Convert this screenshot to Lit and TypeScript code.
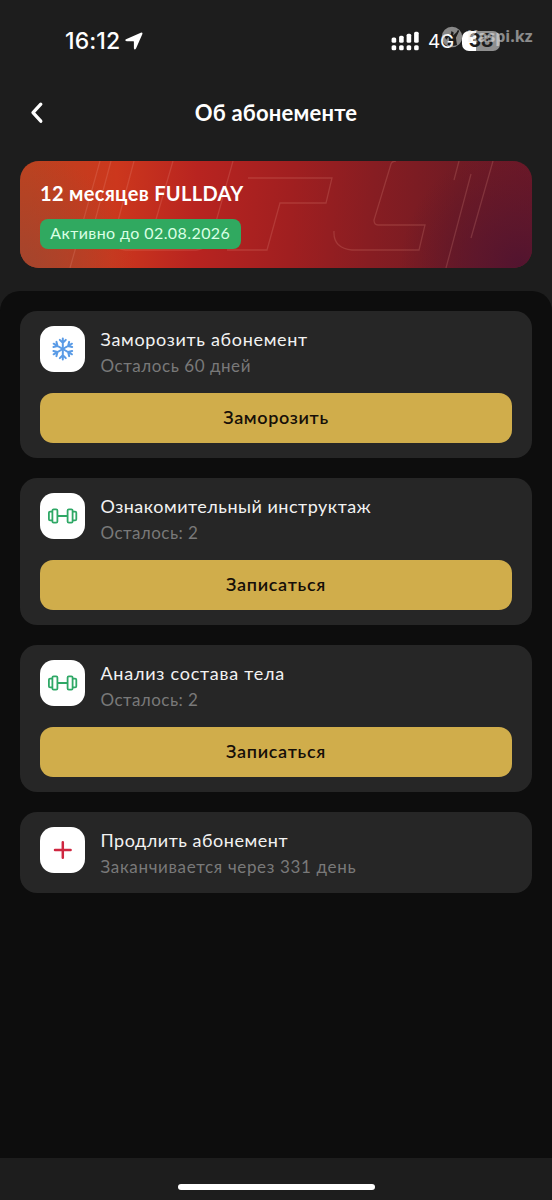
import { LitElement, html, svg, css } from "lit";
import { customElement, property } from "lit/decorators.js";
import { styleMap } from "lit/directives/style-map.js";

const snowflake = html`<svg viewBox="0 0 46 46" width="46" height="46" fill="none" stroke="#5a9be6" stroke-width="2" stroke-linecap="round" stroke-linejoin="round">
  ${[0, 60, 120, 180, 240, 300].map(
    (a) => svg`<path transform="rotate(${a} 22.8 23)" d="M22.8 23V12.4M19.8 13.9L22.8 16.9L25.8 13.9"/>`
  )}
</svg>`;

const dumbbell = html`<svg viewBox="0 0 46 46" width="46" height="46" fill="none" stroke="#2fa866" stroke-width="1.8" stroke-linejoin="round">
  <rect x="12.4" y="16.4" width="5" height="13.2" rx="1.2"/>
  <rect x="27.6" y="16.4" width="5" height="13.2" rx="1.2"/>
  <path d="M12.4 18.6H10.1Q8.9 18.6 8.9 19.8V26.2Q8.9 27.4 10.1 27.4H12.4M32.6 18.6H35.1Q36.3 18.6 36.3 19.8V26.2Q36.3 27.4 35.1 27.4H32.6M17.4 23H27.6"/>
</svg>`;

const plus = html`<svg viewBox="0 0 46 46" width="46" height="46" fill="none" stroke="#cf2740" stroke-width="2.5" stroke-linecap="round">
  <path d="M22.8 15.2V30.8M15 23H30.6"/>
</svg>`;

const icons: Record<string, unknown> = { snowflake, dumbbell, plus };

interface Item {
  icon: string;
  title: string;
  titleSpacing: number;
  note: string;
  noteSpacing: number;
  action?: string;
  actionSpacing?: number;
}

const items: Item[] = [
  { icon: "snowflake", title: "Заморозить абонемент", titleSpacing: 0.68, note: "Осталось 60 дней", noteSpacing: 0.55, action: "Заморозить", actionSpacing: 0.65 },
  { icon: "dumbbell", title: "Ознакомительный инструктаж", titleSpacing: 0.5, note: "Осталось: 2", noteSpacing: 0.45, action: "Записаться", actionSpacing: 0.7 },
  { icon: "dumbbell", title: "Анализ состава тела", titleSpacing: 0.75, note: "Осталось: 2", noteSpacing: 0.45, action: "Записаться", actionSpacing: 0.7 },
  { icon: "plus", title: "Продлить абонемент", titleSpacing: 0.52, note: "Заканчивается через 331 день", noteSpacing: 0.65 },
];

@customElement("option-card")
class OptionCard extends LitElement {
  @property({ attribute: false }) item!: Item;

  static styles = css`
    :host { display: block; background: #262626; border-radius: 17px; padding: 15px 20px; }
    .head { display: flex; gap: 15.5px; height: 51px; }
    .tile { width: 45px; height: 45.5px; border-radius: 14px; background: #fff; flex: none; overflow: hidden; }
    .tile svg { display: block; }
    .title { font-size: 18px; line-height: 26px; color: #f2f2f2; white-space: nowrap; }
    .note { font-size: 17px; line-height: 28px; color: #797979; white-space: nowrap; }
    .action {
      display: flex; align-items: center; justify-content: center; width: 100%; height: 50px; margin-top: 16px;
      padding: 0 0 2px; border: 0; border-radius: 13px; background: #d0ad4b; color: #160f08;
      font: 600 18px/48px "Lato", sans-serif;
    }
  `;

  render() {
    const i = this.item;
    return html`
      <div class="head">
        <div class="tile">${icons[i.icon]}</div>
        <div>
          <div class="title" style=${styleMap({ letterSpacing: `${i.titleSpacing}px` })}>${i.title}</div>
          <div class="note" style=${styleMap({ letterSpacing: `${i.noteSpacing}px` })}>${i.note}</div>
        </div>
      </div>
      ${i.action
        ? html`<button class="action" style=${styleMap({ letterSpacing: `${i.actionSpacing}px` })}>${i.action}</button>`
        : ""}
    `;
  }
}

@customElement("app-root")
class AppRoot extends LitElement {
  static styles = css`
    :host { display: flex; flex-direction: column; position: relative; width: 552px; height: 1200px; overflow: hidden; background: #1d1d1d; color: #fff; font-family: "Lato", sans-serif; }
    .status { display: flex; justify-content: space-between; height: 82px; padding: 0 52px 0 65px; font-family: "Inter", sans-serif; }
    .clock { display: flex; align-items: center; gap: 5px; font-size: 23px; font-weight: 500; letter-spacing: 0.1px; }
    .radio { display: flex; align-items: center; }
    .net { font-size: 19px; margin-left: 8px; width: 34px; letter-spacing: -0.3px; }
    .battery { width: 38px; height: 20px; border-radius: 7px; background: linear-gradient(90deg, #fff 38%, #8f8f8f 38%); color: #1d1d1d; font-size: 19px; font-weight: 700; line-height: 20px; text-align: center; }
    .mark { position: absolute; left: 441px; top: 25px; display: flex; align-items: center; height: 23px; opacity: 0.55; font: 700 16px/23px "Open Sans", sans-serif; color: #e8e8e8; }
    .mark span { margin-left: 4px; }
    .nav { display: grid; grid-template-columns: 50px 1fr 50px; align-items: center; height: 62px; padding: 0 12px; }
    .nav svg { margin-left: 15px; }
    .nav h1 { margin: 0; text-align: center; font-size: 22px; font-weight: 700; line-height: 30px; letter-spacing: 0.2px; }
    .plan { display: grid; margin: 17px 20px 0; height: 107px; border-radius: 19px; overflow: hidden; }
    .plan > * { grid-area: 1 / 1; }
    .info { padding: 19px 20px 0; z-index: 1; }
    .name { font-size: 20px; font-weight: 700; line-height: 27px; letter-spacing: 0.32px; white-space: nowrap; }
    .badge { display: flex; align-items: center; justify-content: center; box-sizing: border-box; margin-top: 12px; padding-bottom: 2px; width: 200.5px; height: 30px; border-radius: 8px; background: #30a960; color: #d9ffe4; font-size: 16px; line-height: 28px; letter-spacing: 0.42px; white-space: nowrap; }
    .sheet { flex: 1; margin-top: 23px; padding: 20px; border-radius: 20px 20px 0 0; background: #0d0d0d; display: flex; flex-direction: column; gap: 20px; }
    .foot { height: 42px; display: flex; justify-content: center; align-items: flex-start; }
    .home { margin-top: 26px; width: 197px; height: 6px; border-radius: 3px; background: #fff; }
  `;

  render() {
    return html`
      <div class="status">
        <div class="clock">
          <span>16:12</span>
          <svg width="18" height="18" viewBox="0 0 18 18"><path d="M1 7.2L15.8.7Q18 .2 17.3 2.2L11 16.6Q9.5 18.8 8.9 16.2V9.7Q8.9 9.2 8.4 9.2H1.7Q-.8 8.7 1 7.2Z" fill="#fff"/></svg>
        </div>
        <div class="radio">
          <svg width="29" height="20" viewBox="0 0 29 20" fill="#fff">
            ${[0, 1, 2, 3].map(
              (i) => svg`<rect x=${0.6 + i * 7.5} y=${[6.6, 4.8, 2.8, 0.7][i]} width="4.6" height=${[5.2, 7, 9, 11.1][i]} rx="1.5"/><rect x=${0.6 + i * 7.5} y="14.3" width="4.6" height="5" rx="1.5"/>`
            )}
          </svg>
          <span class="net">4G</span>
          <span class="battery">38</span>
        </div>
      </div>
      <div class="mark">
        <svg width="22" height="22" viewBox="0 0 22 22">
          <path fill-rule="evenodd" fill="#e0e0e0" d="M11 .7A10.3 10.3 0 1 1 11 21.3A10.3 10.3 0 1 1 11 .7ZM10.5 5L12.7 6.6L12.1 9.4L15.6 6.2L17 3.8L18.2 5.1L14.9 11.7L16 19L12.4 20L11 16L8.8 20L6.4 18.6L8.2 14.2L7.5 11L5.2 13.8L3.6 10.4L6.8 8L9.7 8.4Z"/>
        </svg>
        <span>Kaspi.kz</span>
      </div>
      <div class="nav">
        <svg width="20" height="24" viewBox="0 0 20 24" fill="none" stroke="#fff" stroke-width="3.3" stroke-linecap="round" stroke-linejoin="round"><path d="M13.8 3.2L6 11.7L13.8 20.2"/></svg>
        <h1>Об абонементе</h1>
      </div>
      <div class="plan">
        <svg width="512" height="107" viewBox="20 161 512 107">
          <defs>
            <linearGradient id="g" gradientUnits="userSpaceOnUse" x1="30" y1="200" x2="532" y2="225">
              <stop offset="0" stop-color="#bd421f"/>
              <stop offset=".17" stop-color="#cc371d"/>
              <stop offset=".33" stop-color="#b82420"/>
              <stop offset=".52" stop-color="#a01f20"/>
              <stop offset=".68" stop-color="#871d22"/>
              <stop offset=".85" stop-color="#711b24"/>
              <stop offset="1" stop-color="#6c1828"/>
            </linearGradient>
            <radialGradient id="r" gradientUnits="userSpaceOnUse" cx="20" cy="268" r="115">
              <stop offset="0" stop-color="#a1452f" stop-opacity=".9"/>
              <stop offset="1" stop-color="#a1452f" stop-opacity="0"/>
            </radialGradient>
            <radialGradient id="p" gradientUnits="userSpaceOnUse" cx="520" cy="265" r="120">
              <stop offset="0" stop-color="#52142f"/>
              <stop offset=".4" stop-color="#58162d" stop-opacity=".7"/>
              <stop offset="1" stop-color="#5c1628" stop-opacity="0"/>
            </radialGradient>
          </defs>
          <rect x="20" y="161" width="512" height="107" fill="url(#g)"/>
          <rect x="20" y="161" width="512" height="107" fill="url(#r)"/>
          <rect x="20" y="161" width="512" height="107" fill="url(#p)"/>
          <g fill="none" stroke="#f0a090" stroke-opacity=".2" stroke-width="1.3">
            <path d="M100 161L70 268M111 161L92 232M134 161L114 236Q112 249 126 250H196Q208 249 212 236M173 161L150 240M233 161L212 236M248 178H332L326 203H280L267 250H227M396 161Q392 161 391 164L374 220Q374 225 378 225H425L419 250H352Q333 248 334 231M459 161L454 180M471 174L446 268M493 161L471 238"/>
          </g>
        </svg>
        <div class="info">
          <div class="name">12 месяцев FULLDAY</div>
          <div class="badge">Активно до 02.08.2026</div>
        </div>
      </div>
      <div class="sheet">${items.map((item) => html`<option-card .item=${item}></option-card>`)}</div>
      <div class="foot"><div class="home"></div></div>
    `;
  }
}
